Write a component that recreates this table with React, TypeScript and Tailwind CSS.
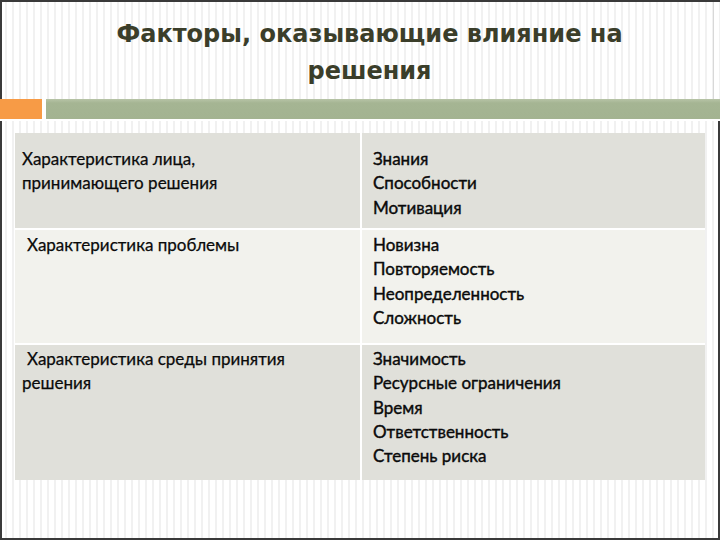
import React from "react";

const rows = [
  {
    left: ["Характеристика лица,", "принимающего решения"],
    leftIndent: false,
    right: ["Знания", "Способности", "Мотивация"],
    h: "h-[95px]",
    pt: "pt-[14px]",
    bg: "bg-[#e0e0da]",
  },
  {
    left: ["Характеристика проблемы"],
    leftIndent: true,
    right: ["Новизна", "Повторяемость", "Неопределенность", "Сложность"],
    h: "h-[113px]",
    pt: "pt-[3px]",
    bg: "bg-[#f2f2ed]",
  },
  {
    left: ["Характеристика среды принятия", "решения"],
    leftIndent: true,
    right: ["Значимость", "Ресурсные ограничения", "Время", "Ответственность", "Степень риска"],
    h: "h-[135px]",
    pt: "pt-[2px]",
    bg: "bg-[#e0e0da]",
  },
];

export default function App() {
  return (
    <div className="w-[720px] h-[540px] overflow-hidden flex flex-col bg-white bg-[repeating-linear-gradient(90deg,#ffffff_0px,#ffffff_5px,#f1f1f1_5px,#f1f1f1_7px)]">
      <div className="h-[99px] border-t-2 border-l-2 border-[#3a3a3a] pr-[6px] shrink-0">
        <div className="h-full border-r border-[#d8d8d8] pl-[24px] pt-[14px] text-center text-[#3b3e2a] font-bold text-[24px] leading-[37px] [font-family:'DejaVu_Sans',Verdana,sans-serif]">
          <div>Факторы, оказывающие влияние на</div>
          <div>решения</div>
        </div>
      </div>
      <div className="h-[22px] flex items-start gap-[4px] shrink-0 bg-white">
        <div className="w-[42px] h-[20px] bg-[#f79b46]" />
        <div className="flex-1 h-[20px] bg-[linear-gradient(180deg,#b7c4a7_0px,#a5b593_4px,#a3b391_100%)]" />
      </div>
      <div className="flex-1 border-l-2 border-r-2 border-b-2 border-[#3a3a3a] pt-[12px] pl-[13px]">
        <div className="grid grid-cols-[345px_343px] gap-[2px] bg-white w-[690px] text-[#0a0a0a] text-[17px] leading-[24.3px] [font-family:Lato,'Open_Sans',sans-serif]">
          {rows.map((r, i) => (
            <React.Fragment key={i}>
              <div className={`${r.bg} ${r.h} ${r.pt} pl-[7px] [-webkit-text-stroke:0.25px_#0a0a0a]`}>
                {r.left.map((t, j) => (
                  <div key={j} className={j === 0 && r.leftIndent ? "pl-[5px]" : ""}>
                    {t}
                  </div>
                ))}
              </div>
              <div className={`${r.bg} ${r.h} ${r.pt} pl-[11px] [-webkit-text-stroke:0.4px_#0a0a0a]`}>
                {r.right.map((t, j) => (
                  <div key={j}>{t}</div>
                ))}
              </div>
            </React.Fragment>
          ))}
        </div>
      </div>
    </div>
  );
}
